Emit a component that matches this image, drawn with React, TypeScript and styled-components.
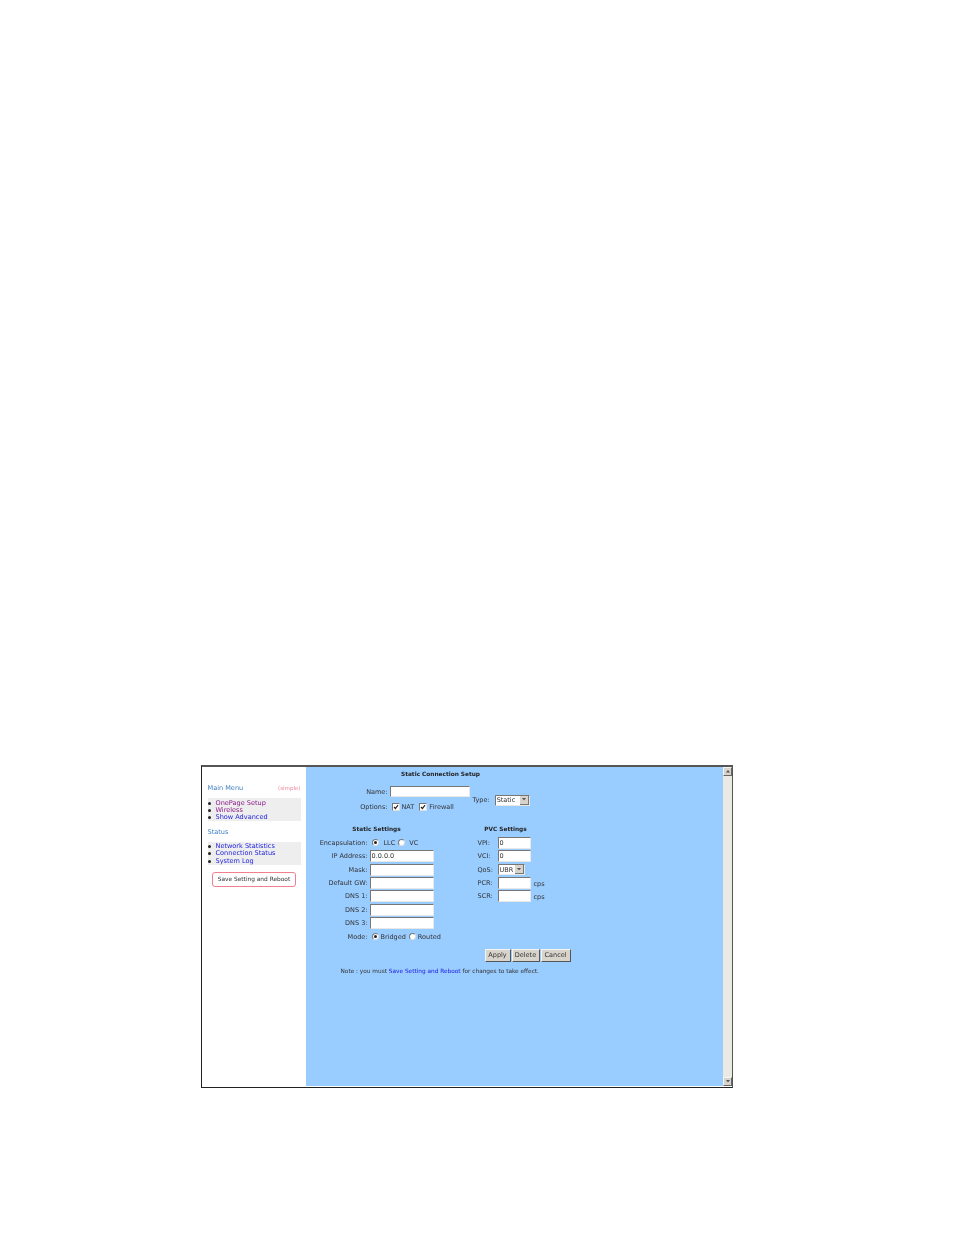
import React from "react";
import styled, { createGlobalStyle } from "styled-components";

const Global = createGlobalStyle`
  html, body { margin: 0; padding: 0; background: #fff; }
  body { font-family: "DejaVu Sans", Verdana, sans-serif; font-size: 6.5px; color: #333; }
  #root { height: 1235px; }
`;
const Page = styled.div`
  box-sizing: border-box;
  height: 1235px;
  padding: 765px 0 0 201px;
`;
const Frame = styled.div`
  box-sizing: border-box;
  width: 532px;
  height: 323px;
  display: flex;
  border-top: 2px solid #555;
  border-left: 1.5px solid #222;
  border-bottom: 1px solid #222;
  border-right: 1px solid #555;
  padding-bottom: 1px;
  background: #fff;
  filter: blur(0.25px);
`;
const Sidebar = styled.nav`
  box-sizing: border-box;
  width: 103.5px;
  flex: none;
  padding: 16px 5px 0 5.5px;
`;
const MenuHead = styled.div`
  display: flex;
  justify-content: space-between;
  align-items: center;
  height: 9px;
  color: #3f7fc0;
  font-size: 6.55px;
`;
const Simple = styled.span`
  color: #f08aa0;
  font-size: 5.5px;
`;
const MenuBox = styled.ul<{ $top: number; $inset: number }>`
  list-style: none;
  margin: ${(p) => p.$top}px 0 0;
  padding: ${(p) => p.$inset}px 0 0;
  background: #eeeeee;
`;
const MenuItem = styled.li`
  display: flex;
  align-items: center;
  height: 7.3px;
  &::before {
    content: "";
    width: 3px;
    height: 3px;
    border-radius: 50%;
    background: #222;
    margin-right: 5px;
  }
`;
const MenuLink = styled.a<{ $visited?: boolean }>`
  color: ${(p) => (p.$visited ? "#8a1a8a" : "#1a1ae0")};
  font-size: 6.55px;
  line-height: 7px;
`;
const StatusHead = styled(MenuHead)`
  margin-top: 6px;
`;
const SaveButton = styled.div`
  box-sizing: border-box;
  width: 84px;
  height: 15px;
  margin: 7px 0 0 4.5px;
  display: flex;
  align-items: center;
  justify-content: center;
  border: 1px solid #f08090;
  border-radius: 3px;
  color: #333;
  font-size: 5.85px;
`;
const Main = styled.main`
  flex: 1;
  background: #99ccff;
`;
const Content = styled.div`
  width: 270px;
  display: flex;
  flex-direction: column;
`;
const Title = styled.div`
  height: 14px;
  line-height: 14px;
  text-align: center;
  font-weight: 700;
  font-size: 5.8px;
  color: #222;
`;
const Top = styled.div`
  display: flex;
  margin-top: 4px;
`;
const TopLeft = styled.div`
  display: grid;
  grid-template-columns: 82px auto;
  grid-template-rows: 13px 17px;
  column-gap: 2px;
  align-items: center;
`;
const Label = styled.label`
  text-align: right;
  white-space: nowrap;
  font-size: 6.5px;
  color: #333;
`;
const TypeWrap = styled.div`
  display: flex;
  align-items: center;
  gap: 5px;
  margin: 9px 0 0 3px;
  height: 12px;
`;
const TextInput = styled.input<{ $w: number }>`
  box-sizing: border-box;
  width: ${(p) => p.$w}px;
  height: 12px;
  margin: 0;
  padding: 0 0 0 1px;
  border-style: solid;
  border-width: 1.5px 1px 1px 1px;
  border-color: #777 #e8e8e8 #e8e8e8 #777;
  background: #fff;
  font-family: "DejaVu Sans", sans-serif;
  font-size: 6.5px;
  color: #333;
  outline: none;
`;
const NameInput = styled(TextInput)`
  height: 11px;
`;
const Select = styled.div<{ $w: number }>`
  box-sizing: border-box;
  width: ${(p) => p.$w}px;
  height: 11px;
  display: flex;
  align-items: center;
  justify-content: space-between;
  border-style: solid;
  border-width: 1px;
  border-color: #777 #e8e8e8 #e8e8e8 #777;
  background: #fff;
  padding-left: 1px;
  font-size: 6.5px;
`;
const SelectArrow = styled.span`
  width: 9px;
  height: 9px;
  display: flex;
  align-items: center;
  justify-content: center;
  background: #d8d4cc;
  border-right: 1px solid #777;
  border-bottom: 1px solid #777;
  box-sizing: border-box;
`;
const Choices = styled.div`
  display: flex;
  align-items: center;
  font-size: 6.5px;
`;
const Check = styled.span<{ $gap: number }>`
  box-sizing: border-box;
  width: 8px;
  height: 8px;
  display: inline-flex;
  align-items: center;
  justify-content: center;
  margin: 0 2px 0 ${(p) => p.$gap}px;
  background: #fff;
  border: 1px solid;
  border-color: #777 #ddd #ddd #777;
`;
const Radio = styled.span<{ $on?: boolean; $before: number; $after: number }>`
  box-sizing: border-box;
  width: 7px;
  height: 7px;
  display: inline-flex;
  align-items: center;
  justify-content: center;
  margin: 0 ${(p) => p.$after}px 0 ${(p) => p.$before}px;
  background: #fff;
  border: 1px solid;
  border-color: #777 #ddd #ddd #777;
  border-radius: 50%;
  &::after {
    content: "";
    width: 3px;
    height: 3px;
    border-radius: 50%;
    background: ${(p) => (p.$on ? "#222" : "transparent")};
  }
`;
const Settings = styled.div`
  display: flex;
  margin-top: 10px;
`;
const LeftCol = styled.section`
  width: 172px;
  flex: none;
`;
const RightCol = styled.section`
  width: 70px;
`;
const LeftHead = styled.div`
  width: 142px;
  height: 8px;
  line-height: 8px;
  text-align: center;
  font-weight: 700;
  font-size: 5.8px;
  color: #222;
`;
const RightHead = styled(LeftHead)`
  width: 56px;
`;
const FormGrid = styled.div<{ $label: number }>`
  display: grid;
  grid-template-columns: ${(p) => p.$label}px auto;
  column-gap: 2px;
  grid-auto-rows: 13.45px;
  align-items: center;
  justify-items: start;
  margin-top: 3px;
`;
const LeftLabel = styled(Label)`
  justify-self: end;
`;
const RightLabel = styled(Label)`
  justify-self: start;
`;
const Unit = styled.span`
  margin: 2px 0 0 3px;
  font-size: 6.5px;
`;
const InputUnit = styled.div`
  display: flex;
  align-items: center;
`;
const Buttons = styled.div`
  display: flex;
  gap: 1px;
  margin: 5px 0 0 179px;
`;
const Btn = styled.div<{ $w: number }>`
  box-sizing: border-box;
  width: ${(p) => p.$w}px;
  height: 13px;
  display: flex;
  align-items: center;
  justify-content: center;
  background: #d8d4cc;
  border-style: solid;
  border-width: 1px;
  border-color: #f4f4f0 #555 #555 #f4f4f0;
  font-size: 6.5px;
  color: #333;
`;
const Note = styled.div`
  margin: 6px 0 0 35px;
  white-space: nowrap;
  font-size: 5.8px;
  line-height: 7px;
  color: #333;
`;
const NoteLink = styled.a`
  color: #1a1ae0;
`;
const Scrollbar = styled.div`
  width: 9px;
  flex: none;
  display: flex;
  flex-direction: column;
  justify-content: space-between;
  background: #ebe9e4;
`;
const ScrollBtn = styled.div`
  box-sizing: border-box;
  width: 9px;
  height: 9px;
  display: flex;
  align-items: center;
  justify-content: center;
  background: #d8d4cc;
  border-style: solid;
  border-width: 1px;
  border-color: #f4f4f0 #666 #666 #f4f4f0;
`;

const Tick = () => (
  <svg width="6" height="6" viewBox="0 0 6 6">
    <path d="M1 3l1.4 1.5L5 1.2" fill="none" stroke="#222" strokeWidth="1.2" />
  </svg>
);
const Arrow = ({ up }: { up?: boolean }) => (
  <svg width="4" height="2.5" viewBox="0 0 5 3">
    <path d={up ? "M2.5 0L5 3H0z" : "M0 0h5L2.5 3z"} fill="#555" />
  </svg>
);

const leftRows = ["IP Address:", "Mask:", "Default GW:", "DNS 1:", "DNS 2:", "DNS 3:"];

export default function App() {
  return (
    <Page>
      <Global />
      <Frame>
        <Sidebar>
          <MenuHead>
            <span>Main Menu</span>
            <Simple>(simple)</Simple>
          </MenuHead>
          <MenuBox $top={6} $inset={1.5}>
            <MenuItem><MenuLink $visited>OnePage Setup</MenuLink></MenuItem>
            <MenuItem><MenuLink $visited>Wireless</MenuLink></MenuItem>
            <MenuItem><MenuLink>Show Advanced</MenuLink></MenuItem>
          </MenuBox>
          <StatusHead><span>Status</span></StatusHead>
          <MenuBox $top={5.6} $inset={1}>
            <MenuItem><MenuLink>Network Statistics</MenuLink></MenuItem>
            <MenuItem><MenuLink>Connection Status</MenuLink></MenuItem>
            <MenuItem><MenuLink>System Log</MenuLink></MenuItem>
          </MenuBox>
          <SaveButton>Save Setting and Reboot</SaveButton>
        </Sidebar>
        <Main>
          <Content>
            <Title>Static Connection Setup</Title>
            <Top>
              <TopLeft>
                <Label>Name:</Label>
                <NameInput $w={80} />
                <Label>Options:</Label>
                <Choices>
                  <Check $gap={2}><Tick /></Check>
                  NAT
                  <Check $gap={5}><Tick /></Check>
                  Firewall
                </Choices>
              </TopLeft>
              <TypeWrap>
                <Label>Type:</Label>
                <Select $w={35}>Static<SelectArrow><Arrow /></SelectArrow></Select>
              </TypeWrap>
            </Top>
            <Settings>
              <LeftCol>
                <LeftHead>Static Settings</LeftHead>
                <FormGrid $label={62}>
                  <LeftLabel>Encapsulation:</LeftLabel>
                  <Choices>
                    <Radio $on $before={2} $after={5} />
                    LLC
                    <Radio $before={3} $after={4} />
                    VC
                  </Choices>
                  {leftRows.map((r, i) => (
                    <React.Fragment key={r}>
                      <LeftLabel>{r}</LeftLabel>
                      <TextInput $w={64} defaultValue={i === 0 ? "0.0.0.0" : ""} />
                    </React.Fragment>
                  ))}
                  <LeftLabel>Mode:</LeftLabel>
                  <Choices>
                    <Radio $on $before={2} $after={2} />
                    Bridged
                    <Radio $before={3} $after={2} />
                    Routed
                  </Choices>
                </FormGrid>
              </LeftCol>
              <RightCol>
                <RightHead>PVC Settings</RightHead>
                <FormGrid $label={18}>
                  <RightLabel>VPI:</RightLabel>
                  <TextInput $w={33} defaultValue="0" />
                  <RightLabel>VCI:</RightLabel>
                  <TextInput $w={33} defaultValue="0" />
                  <RightLabel>QoS:</RightLabel>
                  <Select $w={27}>UBR<SelectArrow><Arrow /></SelectArrow></Select>
                  <RightLabel>PCR:</RightLabel>
                  <InputUnit><TextInput $w={33} /><Unit>cps</Unit></InputUnit>
                  <RightLabel>SCR:</RightLabel>
                  <InputUnit><TextInput $w={33} /><Unit>cps</Unit></InputUnit>
                </FormGrid>
              </RightCol>
            </Settings>
            <Buttons>
              <Btn $w={26}>Apply</Btn>
              <Btn $w={28}>Delete</Btn>
              <Btn $w={30}>Cancel</Btn>
            </Buttons>
            <Note>
              Note : you must <NoteLink>Save Setting and Reboot</NoteLink> for changes to take effect.
            </Note>
          </Content>
        </Main>
        <Scrollbar>
          <ScrollBtn><Arrow up /></ScrollBtn>
          <ScrollBtn><Arrow /></ScrollBtn>
        </Scrollbar>
      </Frame>
    </Page>
  );
}
